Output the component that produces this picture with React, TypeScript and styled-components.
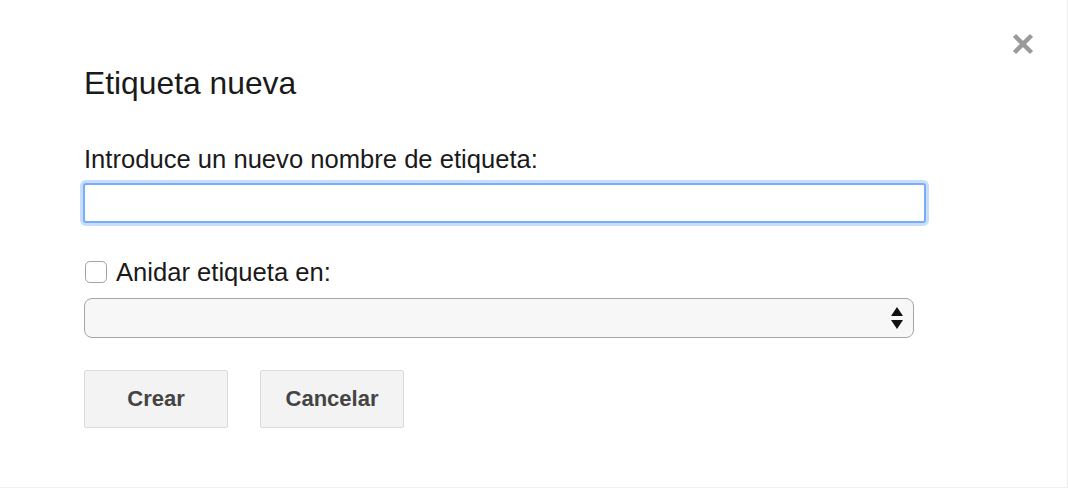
import * as React from "react";
import styled, {createGlobalStyle} from "styled-components";

const GlobalStyle = createGlobalStyle`
  html, body {
    margin: 0;
    padding: 0;
    background: #fff;
  }
  body {
    font-family: "Liberation Sans", Arial, Helvetica, sans-serif;
    color: #222;
  }
`;

const Dialog = styled.div`
  position: relative;
  box-sizing: border-box;
  width: 1068px;
  height: 488px;
  padding: 0 0 0 84px;
  display: flex;
  flex-direction: column;
  align-items: flex-start;
  border-right: 1px solid #ececec;
  border-bottom: 1px solid #f0f0f0;
  background: #fff;
`;

const CloseButton = styled.button`
  position: absolute;
  top: 32px;
  right: 32px;
  width: 24px;
  height: 24px;
  padding: 0;
  border: 0;
  background: none;
  cursor: pointer;
  display: flex;
  align-items: center;
  justify-content: center;
`;

const Title = styled.h2`
  margin: 66px 0 0;
  font-size: 31.8px;
  line-height: 34px;
  font-weight: normal;
  color: #1a1a1a;
`;

const FieldLabel = styled.label`
  display: block;
  margin-top: 44px;
  font-size: 25.6px;
  line-height: 30px;
  color: #1a1a1a;
`;

const NameInput = styled.input`
  box-sizing: border-box;
  width: 843px;
  height: 40px;
  margin-top: 9px;
  margin-left: -1px;
  padding: 4px 8px;
  border: 2px solid #78aef9;
  border-radius: 3px;
  outline: none;
  box-shadow: 0 0 0 3px #c8ddfc;
  font-size: 18px;
  font-family: inherit;
`;

const NestRow = styled.label`
  display: flex;
  align-items: center;
  gap: 9px;
  margin-top: 34px;
  font-size: 25.6px;
  line-height: 30px;
  color: #1a1a1a;
`;

const Check = styled.span`
  box-sizing: border-box;
  width: 22px;
  height: 22px;
  margin-left: 1px;
  border: 1px solid #a3a3a3;
  border-radius: 5px;
  background: #fff;
`;

const SelectBox = styled.div`
  box-sizing: border-box;
  width: 830px;
  height: 40px;
  margin-top: 11px;
  border: 1.5px solid #a6a6a6;
  border-radius: 8px;
  background: #f7f7f7;
  display: flex;
  align-items: center;
  justify-content: flex-end;
  padding-right: 9px;
`;

const Actions = styled.div`
  display: flex;
  gap: 32px;
  margin-top: 32px;
`;

const Button = styled.button`
  box-sizing: border-box;
  width: 144px;
  height: 58px;
  border: 1px solid #dcdcdc;
  border-radius: 2px;
  background: #f3f3f3;
  color: #444;
  font-family: inherit;
  font-size: 22px;
  font-weight: bold;
  cursor: pointer;
`;

const CloseIcon = () => (
  <svg width="22" height="22" viewBox="0 0 22 22">
    <path d="M2.5 2.5 L19.5 19.5 M19.5 2.5 L2.5 19.5" stroke="#9a9a9a" strokeWidth="4.5" strokeLinecap="butt" />
  </svg>
);

const Arrows = () => (
  <svg width="14" height="24" viewBox="0 0 14 24">
    <path d="M7 1 L13 10 L1 10 Z" fill="#111" />
    <path d="M1 14 L13 14 L7 23 Z" fill="#111" />
  </svg>
);

export default function App() {
  return (
    <>
      <GlobalStyle />
      <Dialog>
        <CloseButton aria-label="Cerrar">
          <CloseIcon />
        </CloseButton>
        <Title>Etiqueta nueva</Title>
        <FieldLabel htmlFor="label-name">Introduce un nuevo nombre de etiqueta:</FieldLabel>
        <NameInput id="label-name" type="text" />
        <NestRow>
          <Check />
          Anidar etiqueta en:
        </NestRow>
        <SelectBox>
          <Arrows />
        </SelectBox>
        <Actions>
          <Button>Crear</Button>
          <Button>Cancelar</Button>
        </Actions>
      </Dialog>
    </>
  );
}
